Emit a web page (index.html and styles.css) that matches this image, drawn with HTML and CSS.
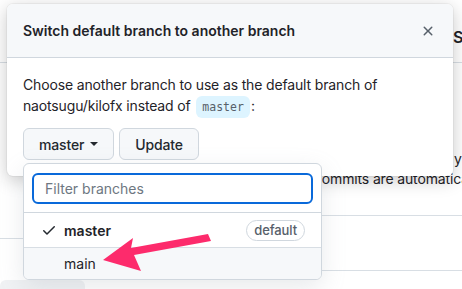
FILE: index.html
```html
<!DOCTYPE html>
<html lang="en">
<head>
    <meta charset="UTF-8">
    <meta name="viewport" content="width=device-width, initial-scale=1.0">
    <title>Switch default branch</title>
    <link rel="stylesheet" href="styles.css">
</head>
<body>
    <div class="page">
        <!-- page behind the dialog -->
        <div class="bg-top"><span class="bg-title">Switch</span></div>
        <div class="bg-main">
            <div class="bg-left">
                <div class="bg-left-row"></div>
                <div class="bg-chip"></div>
            </div>
            <div class="bg-right">
                <div class="bg-line-a">y</div>
                <div class="bg-line-b">commits are automatically</div>
                <div class="bg-rule"></div>
                <div class="bg-rule"></div>
            </div>
        </div>

        <!-- dialog -->
        <div class="dialog">
            <div class="dialog-header">
                <h2>Switch default branch to another branch</h2>
                <button class="close-btn" aria-label="Close">
                    <svg width="16" height="16" viewBox="0 0 16 16"><path d="M3.72 3.72a.75.75 0 0 1 1.06 0L8 6.94l3.22-3.22a.75.75 0 1 1 1.06 1.06L9.06 8l3.22 3.22a.75.75 0 1 1-1.06 1.06L8 9.060l-3.22 3.22a.75.75 0 0 1-1.06-1.06L6.94 8 3.72 4.78a.75.75 0 0 1 0-1.06Z"/></svg>
                </button>
            </div>
            <div class="dialog-body">
                <p>Choose another branch to use as the default branch of naotsugu/kilofx instead of <code>master</code>:</p>
                <div class="actions">
                    <button class="btn">master <span class="caret"></span></button>
                    <button class="btn">Update</button>
                </div>
            </div>
        </div>

        <!-- branch menu -->
        <div class="menu">
            <div class="menu-filter">
                <input type="text" placeholder="Filter branches">
            </div>
            <div class="menu-item">
                <svg class="check" width="16" height="16" viewBox="0 0 16 16"><path d="M13.78 4.22a.75.75 0 0 1 0 1.06l-7.25 7.25a.75.75 0 0 1-1.060 0L2.22 9.28a.75.75 0 0 1 1.06-1.06L6 10.94l6.72-6.72a.75.75 0 0 1 1.06 0Z"/></svg>
                <span class="branch selected">master</span>
                <span class="label">default</span>
            </div>
            <div class="menu-item hover">
                <span class="branch">main</span>
            </div>
        </div>

        <!-- annotation arrow -->
        <svg class="arrow" width="462" height="289" viewBox="0 0 462 289">
            <polygon points="103,260 133,238 131,248 208,234 211,241 134,255 141,271" fill="#fd2b6c"/>
        </svg>
    </div>
</body>
</html>
```

FILE: styles.css
```css
body {
    margin: 0;
    font-family: Inter, "Noto Sans", sans-serif;
    font-size: 14px;
    color: #1f2328;
    background: #fff;
}

.page {
    position: relative;
    width: 462px;
    height: 289px;
    overflow: hidden;
}

/* background page */
.bg-top {
    height: 63px;
    border-bottom: 1px solid #d8dee4;
    box-sizing: border-box;
    padding: 27px 0 0 453px;
}

.bg-title {
    font-size: 16px;
    font-weight: 600;
}

.bg-main {
    display: grid;
    grid-template-columns: 322px 1fr;
}

.bg-left-row {
    height: 175px;
    border-bottom: 1px solid #d8dee4;
}

.bg-chip {
    margin-top: 41px;
    width: 85px;
    height: 20px;
    background: #f0f2f4;
    border-radius: 6px;
}

.bg-right {
    padding-top: 86px;
    line-height: 20px;
    white-space: nowrap;
    letter-spacing: -0.15px;
}

.bg-line-a {
    padding-left: 132px;
}

.bg-line-b {
    margin-left: -8px;
}

.bg-rule {
    height: 26px;
    border-bottom: 1px solid #d8dee4;
}

.bg-rule + .bg-rule {
    height: 54px;
}

/* dialog */
.dialog {
    position: absolute;
    left: 7px;
    top: 4px;
    width: 446px;
    background: #fff;
    border-radius: 6px;
    box-shadow: 0 0 0 1px rgba(0, 0, 0, 0.04), 0 4px 18px rgba(0, 0, 0, 0.22);
    overflow: hidden;
}

.dialog-header {
    display: flex;
    align-items: center;
    justify-content: space-between;
    height: 53px;
    padding: 0 16px;
    background: #f6f8fa;
    border-bottom: 1px solid #d0d7de;
}

.dialog-header h2 {
    margin: 0;
    font-size: 14px;
    font-weight: 600;
}

.close-btn {
    display: flex;
    padding: 0;
    margin-right: 1px;
    border: none;
    background: none;
    fill: #57606a;
}

.dialog-body {
    padding: 16px;
}

.dialog-body p {
    margin: 0 0 10px;
    line-height: 21px;
    letter-spacing: -0.15px;
}

code {
    font-family: "DejaVu Sans Mono", monospace;
    font-size: 11.5px;
    letter-spacing: 0;
    color: #57606a;
    background: #ddf4ff;
    padding: 4px 6px;
    margin: 0 1px 0 2px;
    border-radius: 6px;
}

.actions {
    display: flex;
    gap: 5px;
}

.btn {
    display: flex;
    align-items: center;
    gap: 6px;
    height: 32px;
    padding: 0 15px;
    font-family: inherit;
    font-size: 14px;
    font-weight: 500;
    letter-spacing: -0.15px;
    color: #24292f;
    background: #f6f8fa;
    border: 1px solid #d0d7de;
    border-radius: 6px;
}

.caret {
    border-top: 4px solid #24292f;
    border-left: 4px solid transparent;
    border-right: 4px solid transparent;
}

/* branch menu */
.menu {
    position: absolute;
    left: 23px;
    top: 163px;
    width: 299px;
    background: #fff;
    border: 1px solid #d0d7de;
    border-radius: 6px;
    box-sizing: border-box;
    box-shadow: 0 8px 24px rgba(140, 149, 159, 0.2);
    overflow: hidden;
}

.menu-filter {
    padding: 9px 8px 8px;
    border-bottom: 1px solid #d0d7de;
}

.menu-filter input {
    width: 100%;
    height: 31px;
    box-sizing: border-box;
    padding: 0 11px;
    font-family: inherit;
    font-size: 14px;
    border: 2px solid #0969da;
    border-radius: 6px;
    outline: none;
}

.menu-filter input::placeholder {
    color: #6e7781;
}

.menu-item {
    display: flex;
    align-items: center;
    height: 34px;
    padding: 0 16px 0 40px;
    position: relative;
    border-bottom: 1px solid #d8dee4;
}

.menu-item:last-child {
    height: 31px;
    border-bottom: none;
}

.menu-item.hover {
    background: #f6f8fa;
}

.check {
    position: absolute;
    left: 17px;
    fill: #24292f;
}

.branch {
    flex: 1;
}

.branch.selected {
    font-weight: 600;
}

.label {
    font-size: 13px;
    font-weight: 500;
    letter-spacing: -0.1px;
    color: #57606a;
    border: 1px solid #d0d7de;
    border-radius: 20px;
    padding: 0 7px;
    line-height: 19px;
}

.arrow {
    position: absolute;
    left: 0;
    top: 0;
}
```
